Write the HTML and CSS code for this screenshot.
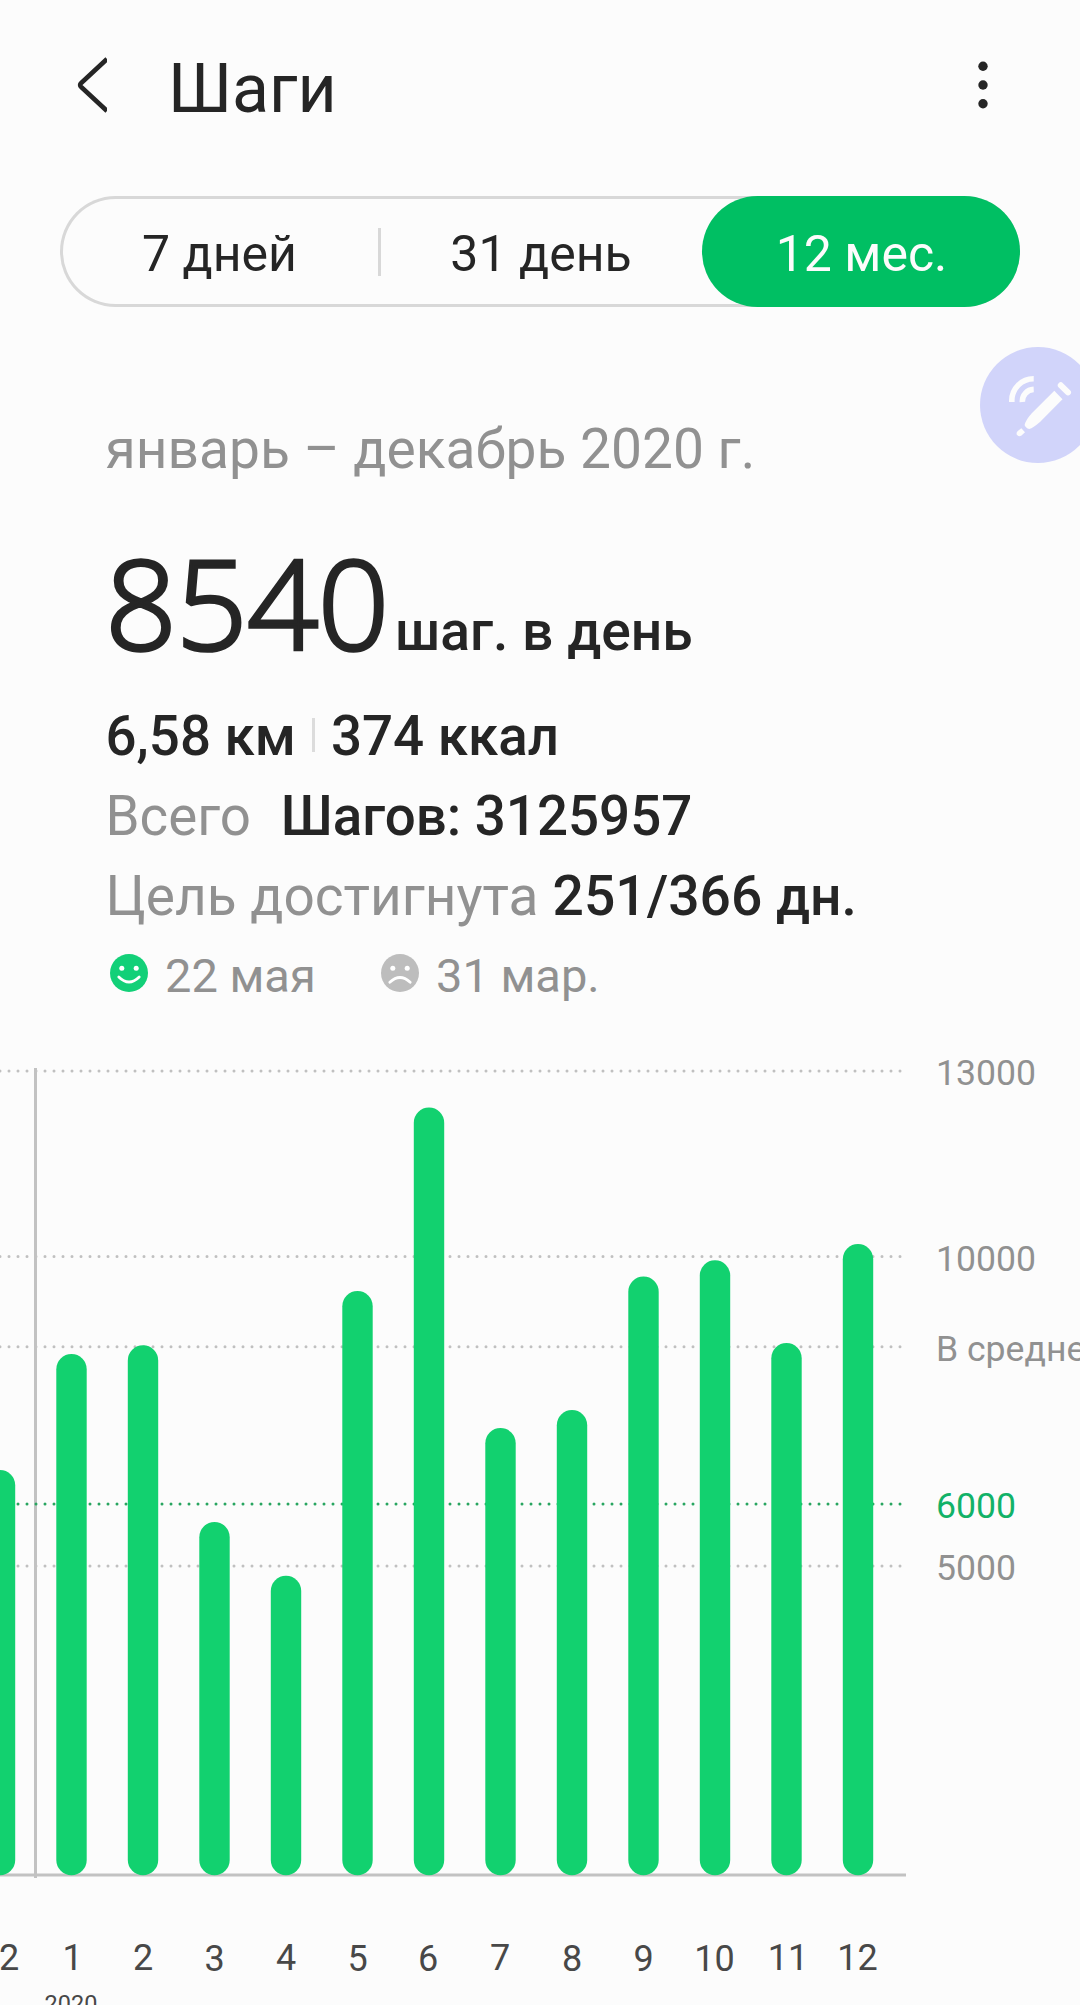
FILE: index.html
```html
<!DOCTYPE html>
<html lang="ru">
<head>
<meta charset="utf-8">
<title>Шаги</title>
<link rel="stylesheet" href="styles.css">
</head>
<body>
<header class="bar">
  <svg class="back" width="32" height="60" viewBox="0 0 32 60" aria-hidden="true"><path d="M32 5L6.200 29Q4 31 6.200 33L32 57" /></svg>
  <h1 class="title">Шаги</h1>
  <svg class="more" width="12" height="60" viewBox="0 0 12 60" aria-hidden="true"><circle cx="6" cy="12.300" r="4.700"/><circle cx="6" cy="31" r="4.700"/><circle cx="6" cy="49.700" r="4.700"/></svg>
</header>
<nav class="tabs">
  <span class="tab">7 дней</span>
  <span class="tab">31 день</span>
  <span class="tab active">12 мес.</span>
</nav>
<svg class="pen" width="116" height="116" viewBox="0 0 116 116" aria-hidden="true">
  <circle class="pen-bg" cx="58" cy="58" r="58"/>
  <path class="wave" d="M31.800 55V53.500A21.800 21.800 0 0 1 53.700 31.800M42.400 55A11.800 11.800 0 0 1 53.700 42.400"/>
  <path class="ink" d="M74.300 43.800L82.500 52.300L60 75Q53 81 49.300 82Q47.500 82 46 80.300Q44.300 79 44.700 77.300Q46.500 72 52 66Z"/>
  <path class="ink" d="M41.300 81.300L45 85.300L41.500 88.500Q38.500 90.300 36.900 87.800Q36 86 37.500 84.300Z"/>
  <path class="cap" d="M80.800 38.300L88 45.300"/>
</svg>
<main>
  <section class="summary">
    <p class="period">январь – декабрь 2020 г.</p>
    <p class="average"><span class="value">8540</span><span class="unit">шаг. в день</span></p>
    <p class="row strong"><span>6,58 км</span><i class="sep"></i><span>374 ккал</span></p>
    <p class="row"><span>Всего</span><b class="total">Шагов: 3125957</b></p>
    <p class="row goal-row"><span>Цель достигнута</span><b class="goal">251/366 дн.</b></p>
    <p class="days">
      <svg class="face good" width="38" height="38" viewBox="0 0 38 38" aria-hidden="true"><circle class="disc" cx="19" cy="19" r="19"/><circle cx="11.800" cy="14.200" r="2.500"/><circle cx="26.200" cy="14.200" r="2.500"/><path d="M8.800 23Q19 33 29.200 23"/></svg>
      <span class="best">22 мая</span>
      <svg class="face bad" width="38" height="38" viewBox="0 0 38 38" aria-hidden="true"><circle class="disc" cx="19" cy="19" r="19"/><circle cx="11.800" cy="14.200" r="2.500"/><circle cx="26.200" cy="14.200" r="2.500"/><path d="M8.800 28.300Q19 18.500 29.200 28.300"/></svg>
      <span>31 мар.</span>
    </p>
  </section>
  <svg class="chart" width="1080" height="965" viewBox="0 1040 1080 965">
    <g class="grid">
      <path d="M0 1071H902"/><path d="M0 1256.400H902"/><path d="M0 1346.700H902"/><path d="M0 1566H902"/>
    </g>
    <path class="axis" d="M0 1875H906M35.500 1068V1878"/>
    <path class="grid target" d="M0 1504H902"/>
    <g class="bars">
      <path d="M0 1485.200V1860"/><path d="M71.500 1369.300V1860"/><path d="M143 1360.500V1860"/><path d="M214.500 1537.200V1860"/>
      <path d="M286 1591V1860"/><path d="M357.500 1306.200V1860"/><path d="M429 1122.700V1860"/><path d="M500.500 1443.200V1860"/>
      <path d="M572 1425.200V1860"/><path d="M643.500 1291.700V1860"/><path d="M715 1275.500V1860"/><path d="M786.500 1358.200V1860"/><path d="M858 1259.300V1860"/>
    </g>
    <g class="scale">
      <text x="936" y="1084.500">13000</text><text x="936" y="1270.500">10000</text><text x="936" y="1360.500">В среднем</text>
      <text class="target-label" x="936" y="1517.500">6000</text><text x="936" y="1579.500">5000</text>
    </g>
    <g class="months">
      <text x="-1" y="1970">12</text><text x="72.500" y="1970">1</text><text x="143" y="1970">2</text><text x="214.500" y="1970.500">3</text>
      <text x="286" y="1970">4</text><text x="357.500" y="1970.500">5</text><text x="428" y="1970.500">6</text><text x="500" y="1970">7</text>
      <text x="572" y="1970.500">8</text><text x="643.500" y="1970.500">9</text><text x="714.500" y="1970.500">10</text><text x="788" y="1970">11</text><text x="857.500" y="1970">12</text>
      <text class="year" x="71" y="2012">2020</text>
    </g>
  </svg>
</main>
</body>
</html>
```
FILE: styles.css
```css
* { box-sizing: border-box; }
html { background: #fcfcfc; }
body {
  margin: 0;
  width: 1080px;
  height: 2005px;
  overflow: hidden;
  position: relative;
  background: #fcfcfc;
  color: #252525;
  font-family: Roboto, "Noto Sans", sans-serif;
}
p, h1 { margin: 0; }
.bar {
  display: flex;
  height: 196px;
  padding: 54px 91px 0 75px;
}
.back path { fill: none; stroke: #252525; stroke-width: 4.6; }
.title {
  flex: 1;
  margin: 1px 0 0 61px;
  font-size: 68px;
  font-weight: 400;
  line-height: 68px;
}
.more { fill: #252525; }
.tabs {
  display: grid;
  grid-template-columns: 321px 321px 318px;
  width: 960px;
  height: 111px;
  margin-left: 60px;
  border-radius: 56px;
  box-shadow: inset 0 0 0 3px #d8d8d8;
  font-size: 50px;
}
.tab {
  display: flex;
  align-items: center;
  justify-content: center;
  padding: 4px 1px 0 0;
}
.tab:first-child {
  padding-right: 2px;
  background: linear-gradient(#d8d8d8, #d8d8d8) right center / 3px 48px no-repeat;
}
.active {
  padding: 4px 0 0 1px;
  border-radius: 56px;
  background: #00bf63;
  color: #fcfcfc;
}
.pen {
  position: absolute;
  left: 980px;
  top: 347px;
}
.pen-bg { fill: #d1d4fa; }
.wave { fill: none; stroke: #fcfcfc; stroke-width: 5.6; }
.ink { fill: #fcfcfc; }
.cap { stroke: #fcfcfc; stroke-width: 6; stroke-linecap: round; }
.summary {
  height: 733px;
  padding: 110px 0 0 105.500px;
  font-size: 54.700px;
  white-space: nowrap;
}
.period { height: 70px; line-height: 64px; font-size: 55.100px; color: #919191; }
.average {
  display: flex;
  align-items: baseline;
  height: 209px;
}
.value {
  font-family: "Open Sans", "Noto Sans", sans-serif;
  font-size: 124.500px;
  font-weight: 300;
  -webkit-text-stroke: 3.6px #252525;
  letter-spacing: -0.200px;
  line-height: 229px;
}
.unit { font-weight: 500; font-size: 55.200px; margin-left: 6px; }
.row {
  display: flex;
  height: 80px;
  line-height: 80px;
  color: #919191;
}
.row b { font-weight: 500; color: #252525; }
.strong { font-weight: 500; color: #252525; }
.sep { width: 3px; height: 34px; margin: 22px 16px 0; background: #dcdcdc; }
.total { margin-left: 30px; }
.goal-row { font-size: 55px; }
.goal { margin-left: 14px; font-size: 55.200px; }
.days {
  display: flex;
  height: 76px;
  padding-left: 4.500px;
  line-height: 80px;
  font-size: 47px;
  color: #919191;
}
.face { flex: none; margin: 18px 17px 0 0; fill: #fff; }
.face path { fill: none; stroke: #fff; stroke-width: 2.8; stroke-linecap: round; }
.good .disc { fill: #12d078; }
.bad .disc { fill: #bdbdbd; }
.best { width: 216px; }
.chart { display: block; }
.grid { stroke: #c0c0c0; stroke-width: 3; stroke-linecap: round; stroke-dasharray: 0 9; }
.target { stroke: #28a560; }
.axis { stroke: #c2c2c2; stroke-width: 3; }
.bars { stroke: #12d16f; stroke-width: 30.4; stroke-linecap: round; }
.scale { fill: #919191; font-size: 35.600px; }
.target-label { fill: #12b268; }
.months { fill: #484848; font-size: 36px; text-anchor: middle; }
.year { font-size: 23.500px; }
```
